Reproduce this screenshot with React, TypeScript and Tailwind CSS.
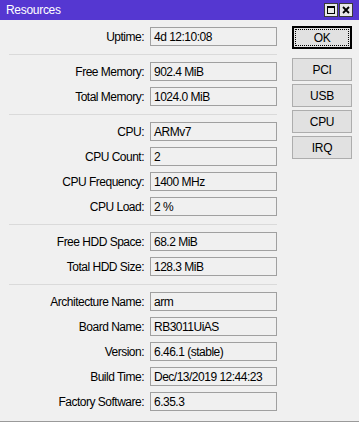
import React from "react";

const font = { fontFamily: '"Liberation Sans", Arial, sans-serif' };

type Row = [string, string];
const groups: Row[][] = [
  [["Uptime:", "4d 12:10:08"]],
  [
    ["Free Memory:", "902.4 MiB"],
    ["Total Memory:", "1024.0 MiB"],
  ],
  [
    ["CPU:", "ARMv7"],
    ["CPU Count:", "2"],
    ["CPU Frequency:", "1400 MHz"],
    ["CPU Load:", "2 %"],
  ],
  [
    ["Free HDD Space:", "68.2 MiB"],
    ["Total HDD Size:", "128.3 MiB"],
  ],
  [
    ["Architecture Name:", "arm"],
    ["Board Name:", "RB3011UiAS"],
    ["Version:", "6.46.1 (stable)"],
    ["Build Time:", "Dec/13/2019 12:44:23"],
    ["Factory Software:", "6.35.3"],
  ],
];

function Field({ label, value }: { label: string; value: string }) {
  return (
    <div className="flex h-[19px] items-center">
      <div className="w-[135px] whitespace-nowrap text-right text-[12px] leading-none tracking-[-0.5px] text-black">
        {label}
      </div>
      <div className="ml-[6px] flex h-[19px] w-[127px] items-center whitespace-nowrap border border-[#a0a0a0] bg-[#f0f0f0] pl-[3px] text-[12px] leading-none tracking-[-0.5px] text-black">
        {value}
      </div>
    </div>
  );
}

function Btn({ children, className = "" }: { children: React.ReactNode; className?: string }) {
  return (
    <div
      className={`flex h-[23px] w-[60px] items-center justify-center border border-[#adadad] bg-[#e1e1e1] text-[12px] leading-none tracking-[-0.3px] text-black ${className}`}
    >
      {children}
    </div>
  );
}

export default function App() {
  return (
    <div className="flex h-[422px] w-[359px] flex-col bg-[#f0f0f0]" style={font}>
      <div className="flex h-[20px] items-center justify-between bg-[#5537d1] pl-[6px] pr-[6px]">
        <span className="text-[12px] leading-none tracking-[-0.3px] text-white">Resources</span>
        <div className="flex gap-[1px]">
          <div className="flex h-[14px] w-[14px] items-center justify-center border border-[#3a3a3a] bg-[#e8e8e8]">
            <svg width="10" height="10" viewBox="0 0 10 10">
              <rect x="1.5" y="1.5" width="7" height="7" fill="none" stroke="#000" strokeWidth="1" />
              <rect x="1" y="1" width="8" height="2" fill="#000" />
            </svg>
          </div>
          <div className="flex h-[14px] w-[14px] items-center justify-center border border-[#3a3a3a] bg-[#e8e8e8]">
            <svg width="10" height="10" viewBox="0 0 10 10">
              <path d="M2 2 L8 8 M8 2 L2 8" stroke="#000" strokeWidth="1.8" />
            </svg>
          </div>
        </div>
      </div>
      <div className="flex flex-1">
        <div className="flex flex-col pl-[9px] pt-[7px]">
          {groups.map((g, gi) => (
            <React.Fragment key={gi}>
              {gi > 0 && <div className="mb-[7px] mt-[8px] h-px w-[268px] bg-[#dadada]" />}
              <div className="flex flex-col gap-[6px]">
                {g.map(([l, v]) => (
                  <Field key={l} label={l} value={v} />
                ))}
              </div>
            </React.Fragment>
          ))}
        </div>
        <div className="ml-[15px] flex flex-col gap-[3px] pt-[6px]">
          <div className="relative flex h-[23px] w-[60px] items-center justify-center border-2 border-black bg-[#e1e1e1] text-[12px] leading-none tracking-[-0.3px] text-black">
            <div className="absolute inset-[1px] border border-dotted border-black" />
            OK
          </div>
          <Btn className="mt-[6px]">PCI</Btn>
          <Btn>USB</Btn>
          <Btn>CPU</Btn>
          <Btn>IRQ</Btn>
        </div>
      </div>
      <div className="h-px w-full bg-[#9a9a9a]" />
    </div>
  );
}
